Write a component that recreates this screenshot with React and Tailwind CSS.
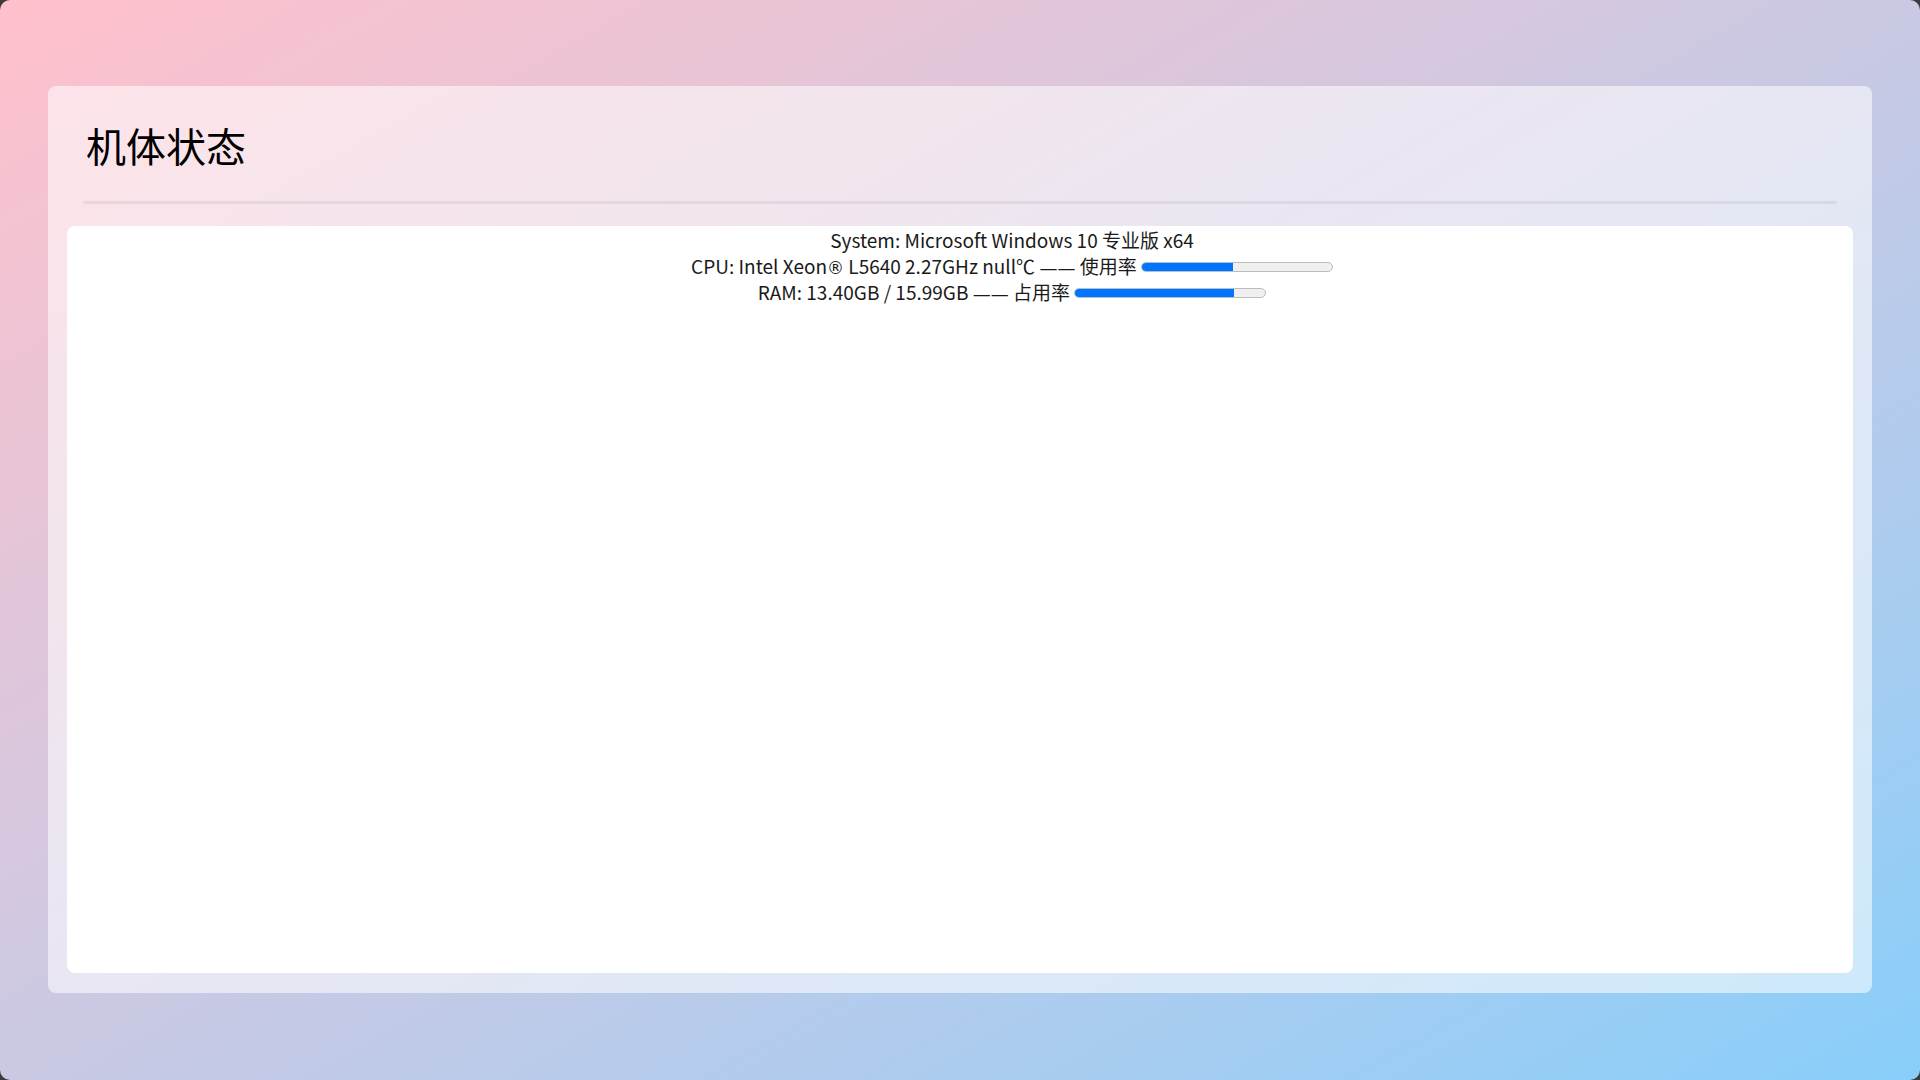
import React from "react";

const stats = {
  system: "Microsoft Windows 10 专业版 x64",
  cpuUsage: 48,
  ramUsed: 13.4,
  ramTotal: 15.99,
};

const Bar = ({ value }) => (
  <span className="inline-block align-middle w-[192px] h-[10px] rounded-full border border-[#bdbdbd] bg-[#efefef] overflow-hidden -mt-[3px]">
    <span className="block h-full bg-[#0075ff]" style={{ width: `${value}%` }} />
  </span>
);

const Dash = () => <span className="font-['DejaVu_Sans'] text-[18px] leading-none">——</span>;

const App = () => {
  const ramRate = (stats.ramUsed / stats.ramTotal) * 100;

  return (
    <div className="bg-[#3a3a3a] min-h-screen">
      <div
        className="min-h-screen w-full rounded-[10px] bg-gradient-to-br from-[#ffc0cb] to-[#87cefa] px-[48px] pt-[86px] pb-[87px] flex"
        style={{ fontFamily: '"Noto Sans CJK SC", "Noto Sans", sans-serif' }}
      >
        <div className="flex-1 flex flex-col rounded-[8px] bg-white/55 px-[19px] pt-[34px] pb-[20px]">
          <div className="px-4 pl-[19px]">
            <h1 className="text-[40px] leading-[50px] text-black font-normal">机体状态</h1>
          </div>
          <div className="mx-4 mt-[31px] h-[3px] rounded-full bg-black/[0.06]" />
          <div className="mt-[22px] flex-1 rounded-[8px] bg-white pt-px pl-[104px] text-center text-[19px] leading-[26px] text-[#1a1a1a]">
            <p>System: {stats.system}</p>
            <p className="h-[26px]">
              CPU: Intel Xeon<span className="font-['DejaVu_Sans'] text-[17px] leading-none">®</span> L5640 2.27GHz null℃ <Dash /> 使用率{" "}
              <Bar value={stats.cpuUsage} />
            </p>
            <p className="h-[26px]">
              RAM: {stats.ramUsed.toFixed(2)}GB / {stats.ramTotal.toFixed(2)}GB <Dash /> 占用率 <Bar value={ramRate} />
            </p>
          </div>
        </div>
      </div>
    </div>
  );
};

export default App;
